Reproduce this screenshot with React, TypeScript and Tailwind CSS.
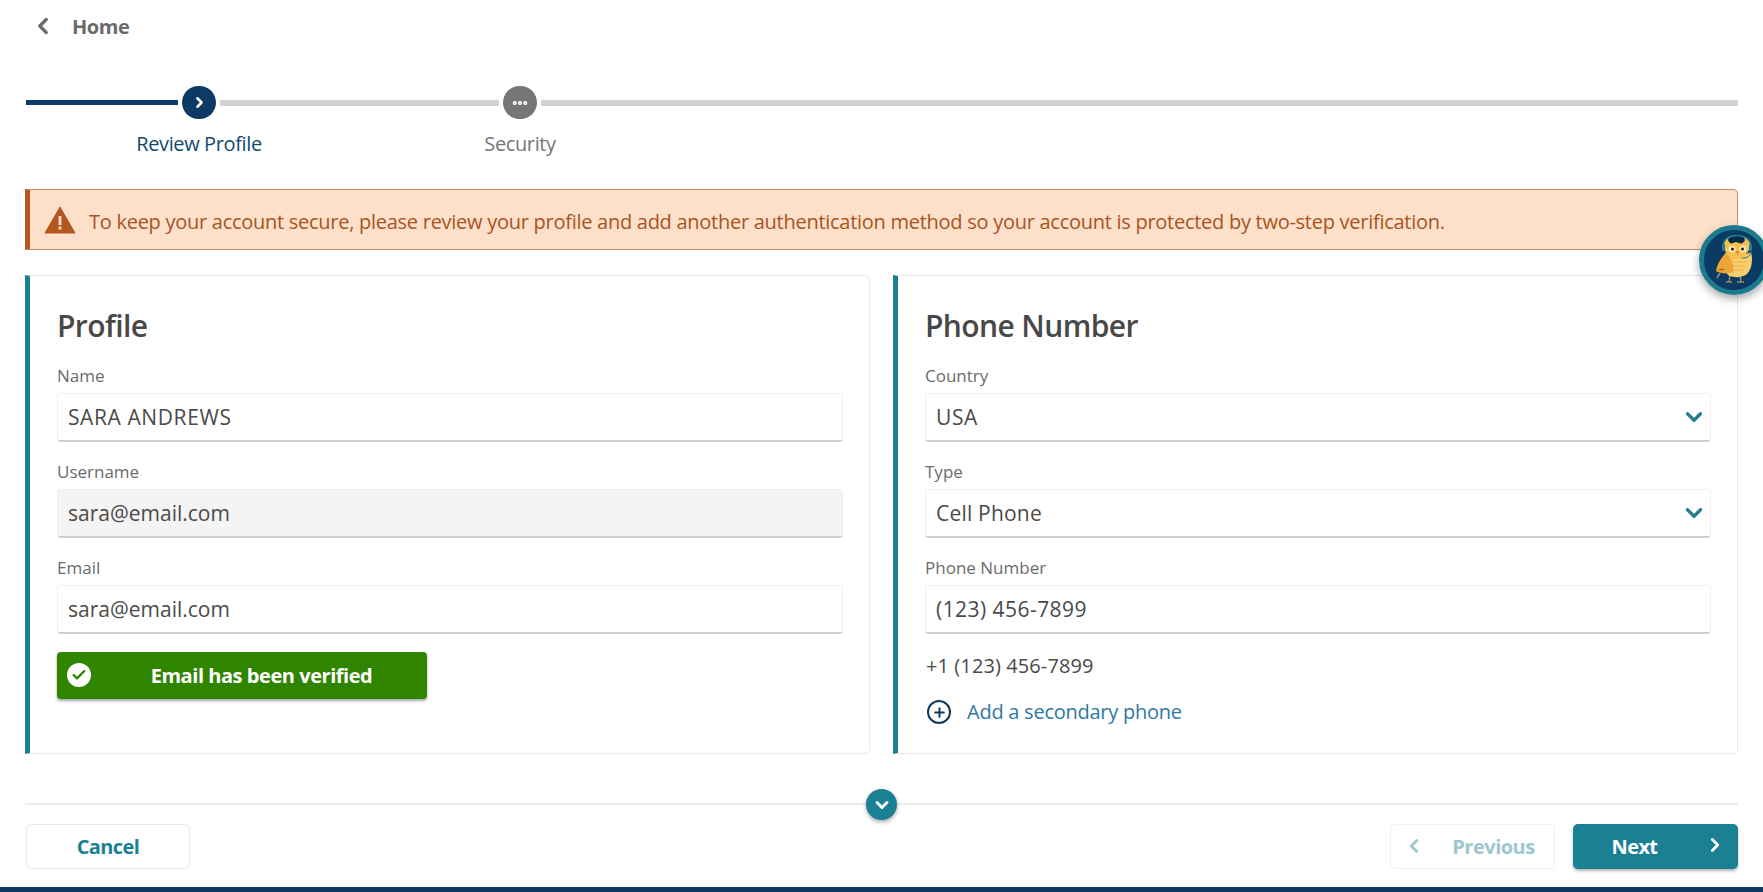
import { Check, ChevronDown, ChevronLeft, ChevronRight, Ellipsis, Plus } from 'lucide-react'

const font = { fontFamily: '"Open Sans", "Noto Sans", sans-serif' }

function Field({ label, value, track, select, disabled }: { label: string; value: string; track: string; select?: boolean; disabled?: boolean }) {
  return (
    <div className="mb-[18px]">
      <div className="h-[25px] text-[17px] leading-[24px] text-[#6b6b6b]">{label}</div>
      <div
        className={`mt-[4px] flex h-[49px] items-center justify-between rounded-[4px] border border-[#efefef] border-b-2 border-b-[#cfcfcf] pl-[10px] pr-[3px] text-[21px] text-[#4a4a4a] ${disabled ? 'bg-[#f4f4f4]' : 'bg-white'}`}
      >
        <span className={`translate-y-[1px] ${track}`}>{value}</span>
        {select && <ChevronDown className="h-[26px] w-[26px] text-[#2a7c8c]" strokeWidth={3} />}
      </div>
    </div>
  )
}

function Owl() {
  return (
    <svg viewBox="0 0 70 70" className="h-full w-full">
      <circle cx="35" cy="35" r="32.5" fill="#0b3a64" stroke="#1b7a8e" strokeWidth="5" />
      {/* feet */}
      <path d="M31 50l-1 7M41 50l1 7M27 57h6M38 57h7M21 48l-3 5" stroke="#9a8a6a" strokeWidth="1.6" fill="none" />
      {/* body */}
      <path d="M26 28c8 3 19 3 26-1 2 8 1 17-4 22-5 4-14 4-19 1-4-5-5-15-3-22z" fill="#f8cf6c" />
      <path d="M33 33h15M33 37h15M33 41h14M33 45h12" stroke="#eeae42" strokeWidth="1.2" />
      {/* wing */}
      <path d="M27 28c-5 5-9 11-10 18 5 3 13 3 17 1 1-7-1-14-7-19z" fill="#eca636" />
      <path d="M20 45l5-1" stroke="#8a5a1a" strokeWidth="1.2" />
      {/* head */}
      <path d="M25 20c0-6 5-10 12-10s14 4 14 10c0 7-6 13-14 13s-12-6-12-13z" fill="#f6c04f" />
      <path d="M29 15c1-4 5-5 8-5 4 0 8 1 9 5-1 3-4 4-6 3l-3-1-3 1c-2 1-4 0-5-3z" fill="#082a47" />
      <circle cx="33" cy="24" r="3.5" fill="#fbe6ad" />
      <circle cx="44" cy="24" r="3.5" fill="#fbe6ad" />
      <circle cx="33.5" cy="24" r="1.5" fill="#222" />
      <circle cx="43.5" cy="24" r="1.5" fill="#222" />
      <path d="M37 26h3l-1.5 4z" fill="#e8743b" />
      {/* headset */}
      <path d="M24 21c0-14 28-14 28 0" fill="none" stroke="#1b8094" strokeWidth="1.3" />
      <rect x="23" y="19" width="3" height="7" rx="1.5" fill="#1b8094" />
      <rect x="50" y="19" width="3" height="7" rx="1.5" fill="#1b8094" />
      <path d="M52 26c0 5-4 7-9 7" fill="none" stroke="#1b8094" strokeWidth="1" />
    </svg>
  )
}

export default function App() {
  return (
    <div style={font} className="relative flex h-[892px] w-full flex-col overflow-hidden bg-white">
      {/* back link */}
      <div className="flex h-[54px] items-center pl-[30px]">
        <ChevronLeft className="h-[26px] w-[26px] -translate-y-[1px] text-[#6b6b6b]" strokeWidth={3} />
        <span className="ml-[16px] text-[20px] font-bold tracking-[-0.45px] text-[#6b6b6b]">Home</span>
      </div>

      {/* stepper */}
      <div className="mt-[32px] flex items-center pl-[26px] pr-[25px]">
        <div className="h-[5px] w-[152px] bg-[#0b3a64]" />
        <div className="ml-[4px] flex h-[33px] w-[34px] items-center justify-center rounded-full bg-[#0b3a64]">
          <ChevronRight className="h-[17px] w-[17px] text-white" strokeWidth={3.5} />
        </div>
        <div className="ml-[4px] h-[6px] w-[279px] bg-[#d3d3d3]" />
        <div className="ml-[4px] flex h-[33px] w-[34px] items-center justify-center rounded-full bg-[#767676]">
          <Ellipsis className="h-[18px] w-[18px] text-white" strokeWidth={3.5} />
        </div>
        <div className="ml-[4px] h-[6px] flex-1 bg-[#d3d3d3]" />
      </div>
      <div className="mt-[11px] flex h-[28px] items-center text-[20px] tracking-[-0.38px]">
        <span className="w-[398px] text-center text-[#0f4a70]">Review Profile</span>
        <span className="w-[244px] text-center text-[#767676]">Security</span>
      </div>

      {/* alert */}
      <div className="mx-[25px] mt-[31px] flex h-[61px] items-center rounded-r-[5px] border border-l-[5px] border-[#c98a63] border-l-[#b5561f] bg-[#fde0c9] pl-[14px] text-[20px] tracking-[-0.27px] text-[#a9531f]">
        <svg viewBox="0 0 32 28" className="h-[28px] w-[32px] shrink-0">
          <path d="M16 1L31 27H1z" fill="#b5561f" stroke="#b5561f" strokeLinejoin="round" />
          <rect x="14.6" y="10" width="2.8" height="9" fill="#fde0c9" />
          <rect x="14.6" y="20.5" width="2.8" height="3" fill="#fde0c9" />
        </svg>
        <span className="ml-[13px] translate-y-[2px] whitespace-nowrap">
          To keep your account secure, please review your profile and add another authentication method so your account is protected by two-step verification.
        </span>
      </div>

      {/* cards */}
      <div className="mx-[25px] mt-[25px] grid h-[479px] grid-cols-2 gap-[23px]">
        <div className="rounded-r-[5px] border border-l-[5px] border-[#e8e8e8] border-l-[#1b8094] pl-[27px] pr-[26px]">
          <h2 className="mt-[28px] h-[44px] text-[30px] font-semibold leading-[44px] tracking-[-0.6px] text-[#484848]">Profile</h2>
          <div className="mt-[16px]">
            <Field label="Name" value="SARA ANDREWS" track="tracking-[0.6px]" />
            <Field label="Username" value="sara@email.com" track="tracking-[0px]" disabled />
            <Field label="Email" value="sara@email.com" track="tracking-[0px]" />
          </div>
          <div className="relative flex h-[47px] w-[370px] items-center justify-center rounded-[4px] bg-[#2f8500] pl-[39px] text-[20px] font-bold tracking-[-0.45px] text-white shadow-[0_2px_3px_rgba(0,0,0,0.35)]">
            <span className="absolute left-[10px] top-[11px] flex h-[24px] w-[24px] items-center justify-center rounded-full bg-white">
              <Check className="h-[16px] w-[16px] text-[#2f8500]" strokeWidth={3.5} />
            </span>
            Email has been verified
          </div>
        </div>

        <div className="rounded-r-[5px] border border-l-[5px] border-[#e8e8e8] border-l-[#1b8094] pl-[27px] pr-[26px]">
          <h2 className="mt-[28px] h-[44px] text-[30px] font-semibold leading-[44px] tracking-[-0.6px] text-[#484848]">Phone Number</h2>
          <div className="mt-[16px]">
            <Field label="Country" value="USA" track="tracking-[0.6px]" select />
            <Field label="Type" value="Cell Phone" track="tracking-[0.2px]" select />
            <Field label="Phone Number" value="(123) 456-7899" track="tracking-[0.45px]" />
          </div>
          <div className="-mt-[1px] ml-[1px] h-[30px] text-[20px] leading-[30px] tracking-[0.1px] text-[#4a4a4a]">+1 (123) 456-7899</div>
          <div className="ml-[2px] mt-[16px] flex h-[30px] items-center">
            <span className="flex h-[24px] w-[24px] items-center justify-center rounded-full border-[2.5px] border-[#0f3a5c]">
              <Plus className="h-[15px] w-[15px] text-[#0f3a5c]" strokeWidth={3} />
            </span>
            <span className="ml-[16px] text-[20px] tracking-[-0.25px] text-[#2f78a6]">Add a secondary phone</span>
          </div>
        </div>
      </div>

      {/* footer */}
      <div className="relative mx-[25px] mt-[49px] h-[2px] bg-[#ededed]">
        <span className="absolute left-[841px] top-[-14px] flex h-[31px] w-[31px] items-center justify-center rounded-full bg-[#1b8094] shadow-[0_2px_4px_rgba(0,0,0,0.35)]">
          <ChevronDown className="h-[20px] w-[20px] text-white" strokeWidth={3.5} />
        </span>
      </div>
      <div className="mx-[25px] mt-[19px] flex items-center justify-between">
        <button className="ml-[1px] h-[45px] w-[164px] rounded-[5px] border border-[#e8e8e8] bg-white text-[20px] font-bold tracking-[-0.6px] text-[#1b8094]">Cancel</button>
        <div className="flex gap-[18px]">
          <button className="relative h-[45px] w-[165px] rounded-[5px] border border-[#f0f0f0] bg-white pl-[42px] text-[20px] font-bold tracking-[-0.5px] text-[#9cc7cf]">
            <ChevronLeft className="absolute left-[12px] top-[10px] h-[22px] w-[22px]" strokeWidth={3} />
            Previous
          </button>
          <button className="relative h-[45px] w-[165px] rounded-[5px] bg-[#1b8094] pr-[42px] text-[20px] font-bold tracking-[-0.6px] text-white shadow-[0_2px_3px_rgba(0,0,0,0.3)]">
            Next
            <ChevronRight className="absolute right-[12px] top-[10px] h-[22px] w-[22px]" strokeWidth={3} />
          </button>
        </div>
      </div>
      <div className="absolute bottom-0 left-0 h-[5px] w-full bg-[#0b3a64]" />

      {/* help owl */}
      <div className="absolute left-[1699px] top-[225px] h-[70px] w-[70px] rounded-full shadow-[0_4px_8px_rgba(0,0,0,0.35)]">
        <Owl />
      </div>
    </div>
  )
}
